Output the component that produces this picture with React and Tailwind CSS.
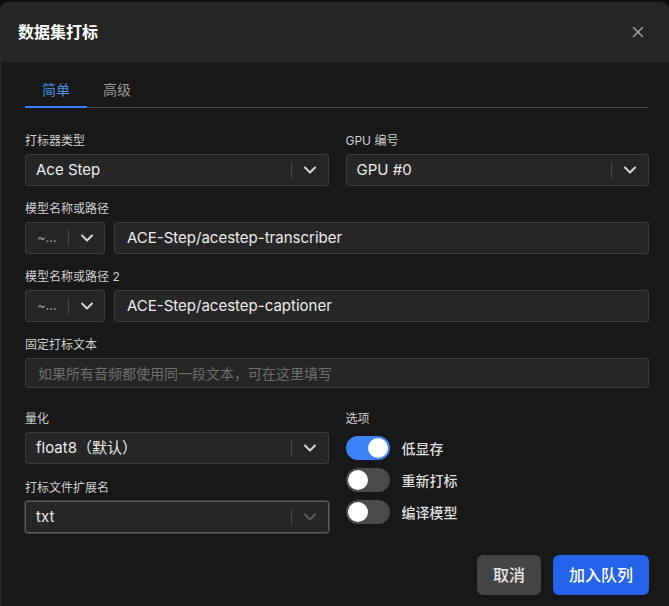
import React, { useState } from "react";
import { ChevronDown, X } from "lucide-react";

const font = { fontFamily: 'Inter, "Noto Sans CJK SC", sans-serif' };

const Label = ({ children }) => (
  <div className="h-4 mb-[5px] text-[12px] leading-4 text-[#cfcfcf]">{children}</div>
);

const Select = ({ value, dim = false, focused = false }) => (
  <div
    className={`h-8 flex items-center rounded-[3px] bg-[#262626] border ${
      focused ? "border-[#5a5a5a] ring-1 ring-[#3c3c3c]" : "border-[#3d3d3d]"
    }`}
  >
    <span className="flex-1 pl-[10px] text-[15px] text-[#ececec] truncate">{value}</span>
    <span className="w-px h-4 bg-[#4a4a4a]" />
    <span className="w-9 flex justify-center">
      <ChevronDown
        size={20}
        strokeWidth={2.4}
        className={dim ? "text-[#5f5f5f]" : "text-[#d8d8d8]"}
      />
    </span>
  </div>
);

const PathRow = ({ value }) => (
  <div className="flex gap-[9px]">
    <div className="w-20 h-8 flex items-center rounded-[3px] bg-[#262626] border border-[#3d3d3d]">
      <span className="pl-[11px] w-[42px] text-[13px] text-[#9a9a9a]">~...</span>
      <span className="w-px h-4 bg-[#4a4a4a]" />
      <span className="flex-1 flex justify-center">
        <ChevronDown size={20} strokeWidth={2.4} className="text-[#d8d8d8]" />
      </span>
    </div>
    <div className="flex-1 h-8 flex items-center px-3 rounded-[3px] bg-[#262626] border border-[#3d3d3d] text-[15px] text-[#ececec]">
      {value}
    </div>
  </div>
);

const Toggle = ({ on, label, onClick }) => (
  <div className="flex items-center gap-3 cursor-pointer" onClick={onClick}>
    <div
      className={`w-11 h-6 rounded-full flex items-center px-[2px] ${
        on ? "bg-[#3b82f6] justify-end" : "bg-[#4b4b4b] justify-start"
      }`}
    >
      <div className="w-5 h-5 rounded-full bg-white" />
    </div>
    <span className="text-[14px] font-medium text-[#dedede]">{label}</span>
  </div>
);

export default function App() {
  const [opts, setOpts] = useState({ low: true, redo: false, compile: false });
  const [tab, setTab] = useState("simple");

  return (
    <div className="w-[669px] h-[606px] bg-[#0e0e0e] pt-[2px]" style={font}>
      <div className="h-full flex flex-col rounded-t-lg bg-[#181818] border-l border-[#2a2a2a] overflow-hidden">
        {/* Header */}
        <div className="h-[60px] shrink-0 bg-[#262626] flex items-center justify-between pl-[17px] pr-[22px]">
          <h2 className="text-[16px] font-bold text-white">数据集打标</h2>
          <X size={18} strokeWidth={1.6} className="text-[#b0b0b0]" />
        </div>

        <div className="flex-1 flex flex-col pl-6 pr-5 pt-[9px] pb-[11px]">
          {/* Tabs */}
          <div className="flex border-b border-[#464646]">
            <button
              onClick={() => setTab("simple")}
              className={`relative h-[36px] px-[17px] text-[14px] ${
                tab === "simple" ? "text-[#4a90e2]" : "text-[#9a9a9a]"
              }`}
            >
              简单
              {tab === "simple" && (
                <span className="absolute left-0 right-0 -bottom-px h-[2px] bg-[#3b82f6]" />
              )}
            </button>
            <button
              onClick={() => setTab("advanced")}
              className={`relative h-[36px] px-4 text-[14px] ${
                tab === "advanced" ? "text-[#4a90e2]" : "text-[#9a9a9a]"
              }`}
            >
              高级
              {tab === "advanced" && (
                <span className="absolute left-0 right-0 -bottom-px h-[2px] bg-[#3b82f6]" />
              )}
            </button>
          </div>

          {/* Top fields */}
          <div className="grid grid-cols-2 gap-x-[17px] mt-[25px]">
            <div>
              <Label>打标器类型</Label>
              <Select value="Ace Step" />
            </div>
            <div>
              <Label>GPU 编号</Label>
              <Select value="GPU #0" />
            </div>
          </div>

          <div className="mt-[15px]">
            <Label>模型名称或路径</Label>
            <PathRow value="ACE-Step/acestep-transcriber" />
          </div>

          <div className="mt-[15px]">
            <Label>模型名称或路径 2</Label>
            <PathRow value="ACE-Step/acestep-captioner" />
          </div>

          <div className="mt-[15px]">
            <Label>固定打标文本</Label>
            <div className="h-[30px] flex items-center px-3 rounded-[3px] bg-[#262626] border border-[#3d3d3d] text-[14px] text-[#6e6e6e]">
              如果所有音频都使用同一段文本，可在这里填写
            </div>
          </div>

          {/* Bottom section */}
          <div className="grid grid-cols-2 gap-x-[17px] mt-[23px]">
            <div>
              <Label>量化</Label>
              <Select value="float8（默认）" />
              <div className="mt-4">
                <Label>打标文件扩展名</Label>
                <Select value="txt" dim focused />
              </div>
            </div>
            <div>
              <Label>选项</Label>
              <div className="flex flex-col gap-2 pt-[4px]">
                <Toggle
                  on={opts.low}
                  label="低显存"
                  onClick={() => setOpts({ ...opts, low: !opts.low })}
                />
                <Toggle
                  on={opts.redo}
                  label="重新打标"
                  onClick={() => setOpts({ ...opts, redo: !opts.redo })}
                />
                <Toggle
                  on={opts.compile}
                  label="编译模型"
                  onClick={() => setOpts({ ...opts, compile: !opts.compile })}
                />
              </div>
            </div>
          </div>

          {/* Footer */}
          <div className="mt-auto flex justify-end gap-3">
            <button className="w-16 h-10 rounded-md bg-[#444444] text-[16px] font-medium text-[#e6e6e6]">
              取消
            </button>
            <button className="w-24 h-10 rounded-md bg-[#2563eb] text-[16px] font-medium text-white">
              加入队列
            </button>
          </div>
        </div>
      </div>
    </div>
  );
}
